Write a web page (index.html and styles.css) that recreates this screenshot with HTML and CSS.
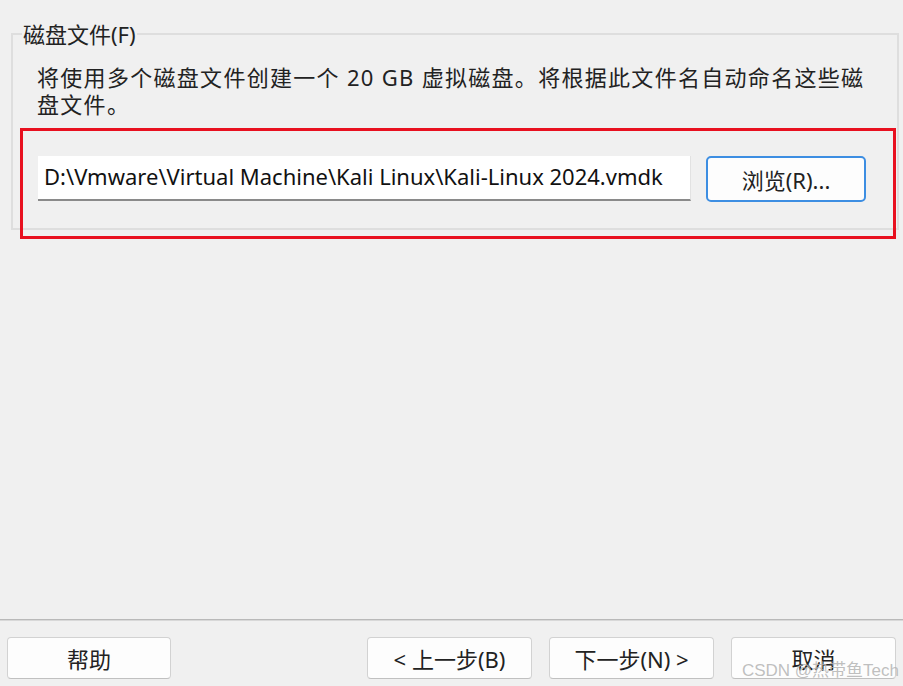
FILE: index.html
```html
<!DOCTYPE html>
<html lang="zh-CN">
<head>
<meta charset="utf-8">
<title>磁盘文件</title>
<link rel="stylesheet" href="styles.css">
</head>
<body>
<div class="dialog">
  <main class="content">
    <fieldset class="group">
      <legend class="group-title">磁盘文件(F)</legend>
      <p class="desc">将使用多个磁盘文件创建一个 20 GB 虚拟磁盘。将根据此文件名自动命名这些磁盘文件。</p>
      <div class="file-row">
        <input class="path" type="text" value="D:\Vmware\Virtual Machine\Kali Linux\Kali-Linux 2024.vmdk">
        <button class="btn browse">浏览(R)...</button>
      </div>
    </fieldset>
    <div class="highlight"></div>
  </main>
  <footer class="footer">
    <button class="btn help">帮助</button>
    <div class="nav">
      <button class="btn">&lt; 上一步(B)</button>
      <button class="btn">下一步(N) &gt;</button>
      <button class="btn">取消</button>
    </div>
    <span class="watermark">CSDN @热带鱼Tech</span>
  </footer>
</div>
</body>
</html>
```

FILE: styles.css
```css
* { box-sizing: border-box; }
html, body { margin: 0; padding: 0; }
body {
  background: #f0f0f0;
  font-family: "Noto Sans", "Noto Sans CJK SC", sans-serif;
  font-size: 22px;
  color: #111;
}
.dialog {
  width: 903px;
  height: 686px;
  display: flex;
  flex-direction: column;
  position: relative;
  overflow: hidden;
}
.content {
  flex: 1;
  position: relative;
  padding: 21px 10px 0 11px;
}
.group {
  margin: 0;
  width: 882px;
  height: 209px;
  border: 2px solid #dedede;
  padding: 0 24px 0 24px;
}
.group-title {
  padding: 0 1px;
  margin-left: -15px;
  line-height: 26px;
  color: #222;
}
.desc {
  margin: 17px 0 0 0;
  line-height: 27px;
  width: 836px;
  letter-spacing: 1.3px;
  color: #222;
}
.file-row {
  display: flex;
  gap: 15px;
  margin-top: 38px;
  margin-left: 1px;
}
.path {
  width: 653px;
  height: 45px;
  border: none;
  border-right: 1px solid #e2e2e2;
  border-bottom: 2px solid #8a8a8a;
  background: #fff;
  font: inherit;
  color: #111;
  padding: 0 6px 3px 6px;
  outline: none;
}
.btn {
  font: inherit;
  color: #222;
  background: #fdfdfd;
  border: 1px solid #d2d2d2;
  border-bottom-color: #c0c0c0;
  border-radius: 4px;
  height: 42px;
  width: 165px;
  padding: 0;
}
.browse {
  width: 160px;
  height: 46px;
  border: 2px solid #3d8ee2;
  border-radius: 5px;
}
.highlight {
  position: absolute;
  left: 20px;
  top: 128px;
  width: 876px;
  height: 111px;
  border: 3px solid #e8101f;
  pointer-events: none;
}
.footer {
  border-top: 1px solid #b9b9b9;
  box-shadow: inset 0 1px 0 #d8d8d8;
  padding: 17px 7px 7px 7px;
  display: flex;
  justify-content: space-between;
  position: relative;
  height: 67px;
}
.help { width: 164px; }
.nav {
  display: flex;
  gap: 17px;
}
.watermark {
  position: absolute;
  right: 4px;
  bottom: 5px;
  font-size: 17px;
  color: rgba(180, 180, 180, 0.85);
  font-family: "Liberation Sans", "Noto Sans CJK SC", sans-serif;
}
```
